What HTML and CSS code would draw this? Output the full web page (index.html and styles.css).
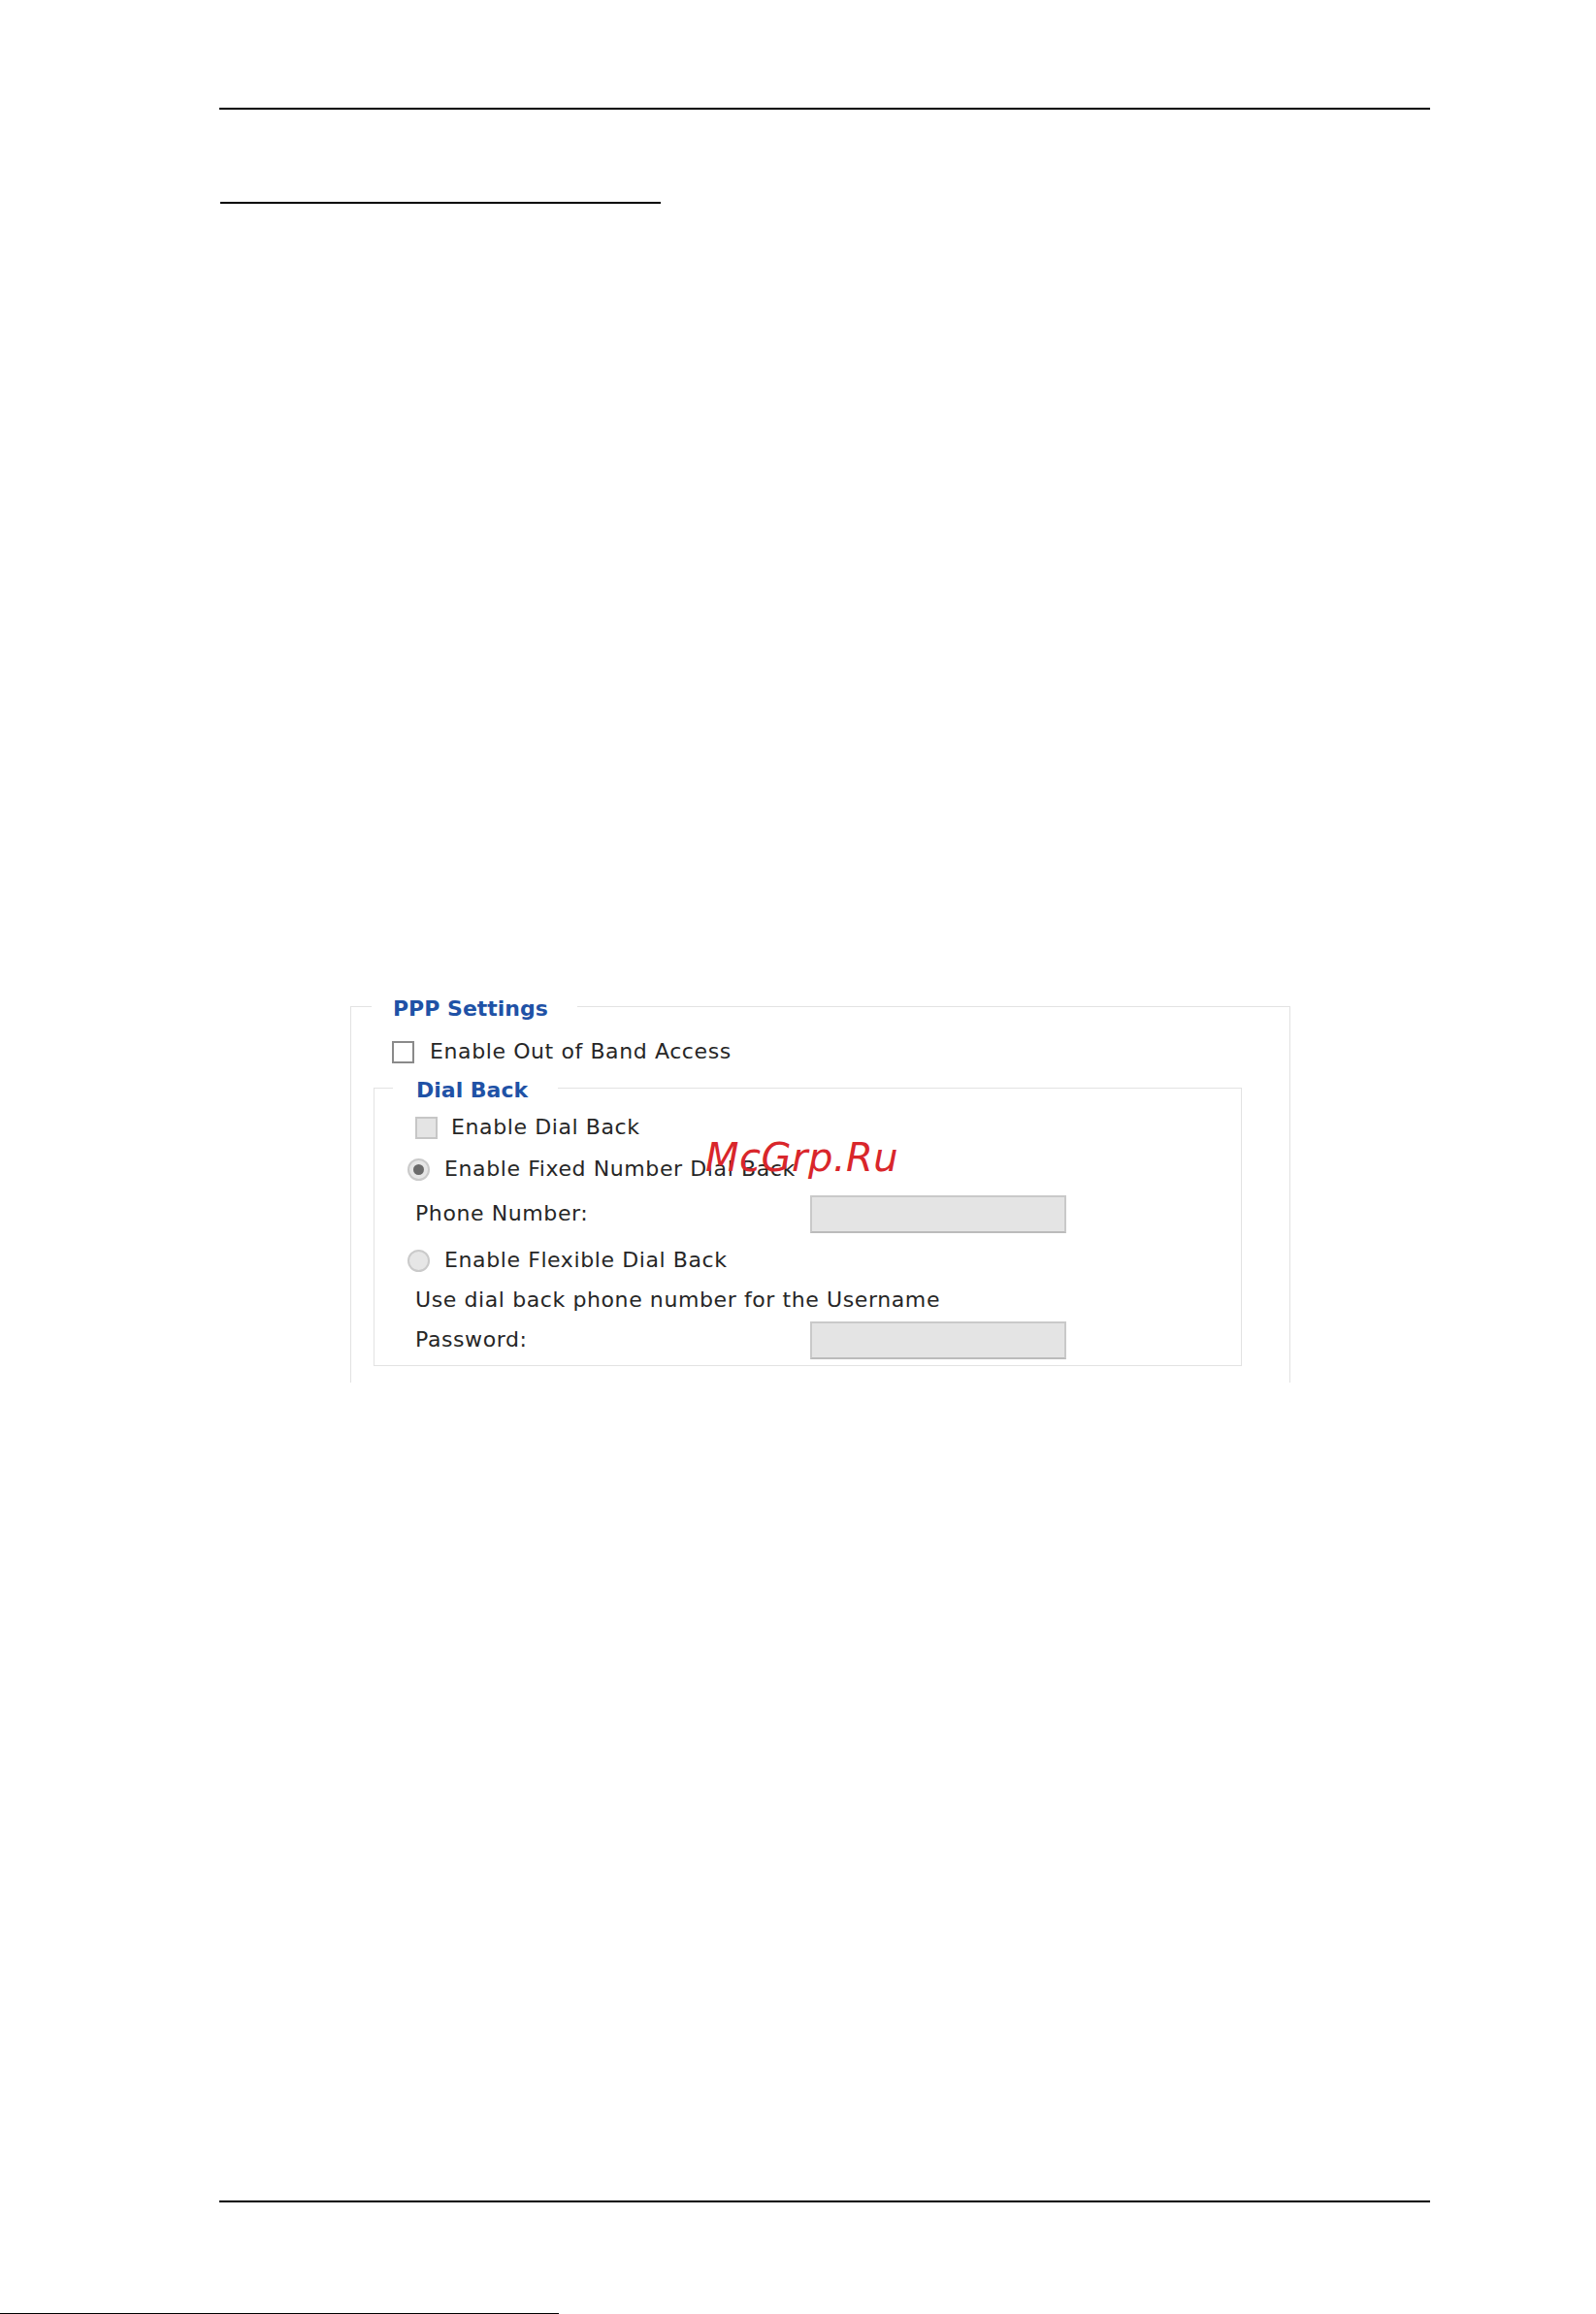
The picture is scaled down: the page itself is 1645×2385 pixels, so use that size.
FILE: index.html
```html
<!DOCTYPE html>
<html lang="en">
<head>
    <meta charset="UTF-8">
    <title>PPP Settings</title>
    <link rel="stylesheet" href="styles.css">
</head>
<body>
    <div class="page">
        <div class="top-rule"></div>
        <div class="section-rule"></div>

        <fieldset class="ppp">
            <legend>PPP Settings</legend>
            <div class="row first">
                <span class="check"></span>
                <span class="label">Enable Out of Band Access</span>
            </div>

            <fieldset class="dialback">
                <legend>Dial Back</legend>
                <div class="row r1">
                    <span class="check off"></span>
                    <span class="label">Enable Dial Back</span>
                </div>
                <div class="row r2 opt">
                    <span class="radio on"></span>
                    <span class="label">Enable Fixed Number Dial Back</span>
                </div>
                <div class="row r3">
                    <span class="field-name">Phone Number:</span>
                    <span class="box"></span>
                </div>
                <div class="row r4 opt">
                    <span class="radio"></span>
                    <span class="label">Enable Flexible Dial Back</span>
                </div>
                <div class="row r5">
                    <span class="label">Use dial back phone number for the Username</span>
                </div>
                <div class="row r6">
                    <span class="field-name">Password:</span>
                    <span class="box"></span>
                </div>
            </fieldset>
        </fieldset>

        <div class="bottom-rule"></div>
        <div class="edge"></div>

        <div class="stamp">McGrp.Ru</div>
    </div>
</body>
</html>
```

FILE: styles.css
```css
* {
    margin: 0;
    padding: 0;
    box-sizing: border-box;
}

body {
    background: #fff;
    font-family: "DejaVu Sans", Verdana, sans-serif;
    color: #262626;
}

.page {
    position: relative;
    width: 1645px;
    height: 2385px;
    overflow: hidden;
}

/* page rules */
.top-rule {
    margin: 111px 0 0 226px;
    width: 1248px;
    height: 2px;
    background: #000;
}

.section-rule {
    margin: 95px 0 0 227px;
    width: 454px;
    height: 2px;
    background: #000;
}

.bottom-rule {
    margin: 843px 0 0 226px;
    width: 1248px;
    height: 2px;
    background: #000;
}

.edge {
    margin-top: 114px;
    width: 576px;
    height: 1px;
    background: #000;
}

/* settings panel */
fieldset {
    border: 1px solid #e2e2e2;
    min-width: 0;
}

legend {
    font-weight: bold;
    font-size: 22px;
    line-height: 26px;
    color: #1f52a6;
    padding-top: 5px;
}

.ppp {
    margin: 812px 0 0 361px;
    width: 969px;
    padding: 0 0 17px 21px;
    border-bottom: none;
}

.ppp > legend {
    padding-left: 22px;
    padding-right: 30px;
}

.dialback {
    margin: 4px 0 0 2px;
    width: 895px;
    padding: 0 0 3px 19px;
}

.dialback > legend {
    padding-left: 24px;
    padding-right: 31px;
}

.row {
    display: flex;
    align-items: center;
    font-size: 22px;
    line-height: 26px;
    letter-spacing: 0.6px;
    padding-left: 23px;
}

.row.first {
    margin-top: 13px;
    height: 36px;
    padding-left: 21px;
}

.row.opt {
    padding-left: 15px;
}

.r1 { margin-top: 3px; height: 44px; }
.r2 { height: 42px; }
.r3 { height: 50px; }
.r4 { height: 46px; }
.r5 { height: 36px; }
.r6 { height: 46px; }

.check {
    width: 23px;
    height: 23px;
    border: 2px solid #8a8a8a;
    background: #fff;
    margin-right: 16px;
    flex-shrink: 0;
}

.check.off {
    border-color: #c6c6c6;
    background: #e4e4e4;
    margin-right: 14px;
}

.radio {
    width: 23px;
    height: 23px;
    border-radius: 50%;
    border: 2px solid #cacaca;
    background: #e6e6e6;
    margin-right: 15px;
    flex-shrink: 0;
    display: flex;
    align-items: center;
    justify-content: center;
}

.radio.on::after {
    content: "";
    width: 11px;
    height: 11px;
    border-radius: 50%;
    background: #6b6b6b;
}

.field-name {
    width: 407px;
    flex-shrink: 0;
}

.box {
    width: 264px;
    height: 39px;
    background: #e4e4e4;
    border: 2px solid #c9c9c9;
    border-bottom-color: #bbb;
}

/* red site mark laid over the form */
.stamp {
    position: absolute;
    left: 727px;
    top: 1173px;
    font-size: 40px;
    line-height: 40px;
    font-style: italic;
    color: #d9262b;
    letter-spacing: 0.5px;
}
```
